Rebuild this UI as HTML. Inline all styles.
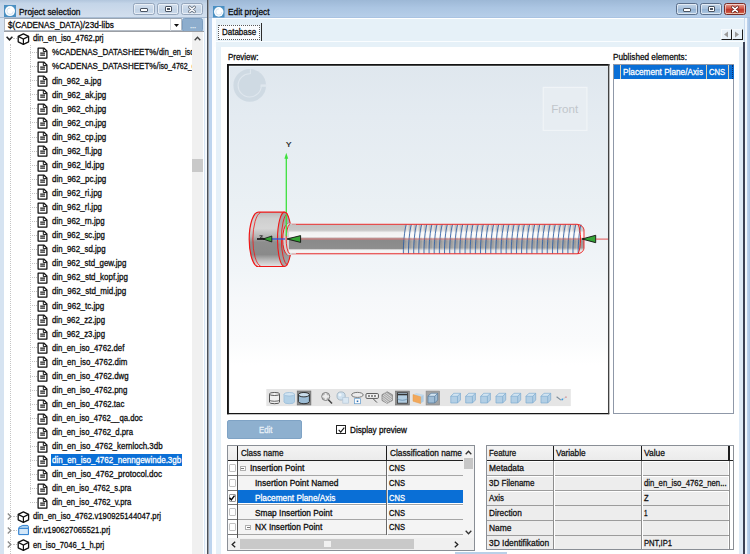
<!DOCTYPE html>
<html><head><meta charset="utf-8"><title>Edit project</title>
<style>
html,body{margin:0;padding:0;background:#fff}
#app{position:relative;width:750px;height:554px;overflow:hidden;background:#fff;font-family:"Liberation Sans", sans-serif}
#app div,#app svg,#app span.t{position:absolute}
#app svg{overflow:visible}
.t{-webkit-text-stroke:0.3px currentColor;white-space:pre;line-height:14px;height:14px;transform-origin:0 50%;display:block}
.clip{overflow:hidden;height:14px}
</style></head><body><div id="app">
<div style="left:0px;top:0px;width:208px;height:554px;background:#d6e3f1"></div>
<div style="left:0px;top:0px;width:208px;height:17.5px;background:linear-gradient(#b2c6dd,#c4d5e8 20%,#ccdaeb 60%,#d3e0ef)"></div>
<div style="left:0px;top:17px;width:208px;height:1px;background:#a9bdd4"></div>
<div style="left:203.3px;top:17.6px;width:3.6px;height:536.4px;background:linear-gradient(90deg,#d6e4f3 60%,#f4f8fc 62%)"></div>
<svg style="left:4px;top:5px" width="12" height="12" viewBox="0 0 12 12"><rect width="12" height="12" fill="#4b90c2"/><circle cx="6" cy="6.1" r="5" fill="#fdfeff"/><path d="M6.2 3a3.2 3.2 0 1 0 3.1 3.3" fill="none" stroke="#cfe2f1" stroke-width="0.9"/></svg>
<div style="left:133.3px;top:3.2px;width:22px;height:12.2px;box-sizing:border-box;border:1px solid #95a6bc;border-radius:2.5px;background:linear-gradient(#d3dfed,#c8d7e8 45%,#c1d2e5 50%,#cad9ea);box-shadow:inset 0 0 0 1px rgba(255,255,255,.55)"></div>
<div style="left:140.3px;top:8.4px;width:8px;height:3.4px;box-sizing:border-box;border:1px solid #4b5563;background:#fff;border-radius:1px"></div>
<div style="left:157.3px;top:3.2px;width:21.8px;height:12.2px;box-sizing:border-box;border:1px solid #95a6bc;border-radius:2.5px;background:linear-gradient(#d3dfed,#c8d7e8 45%,#c1d2e5 50%,#cad9ea);box-shadow:inset 0 0 0 1px rgba(255,255,255,.55)"></div>
<div style="left:164.70000000000002px;top:5.700000000000001px;width:7.5px;height:6px;box-sizing:border-box;border:1.2px solid #4b5563;background:#fff;border-radius:1px"></div>
<div style="left:166.70000000000002px;top:7.700000000000001px;width:3.5px;height:2px;background:#4b5563"></div>
<div style="left:181.1px;top:3.2px;width:21.8px;height:12.2px;box-sizing:border-box;border:1px solid #95a6bc;border-radius:2.5px;background:linear-gradient(#d3dfed,#c8d7e8 45%,#c1d2e5 50%,#cad9ea);box-shadow:inset 0 0 0 1px rgba(255,255,255,.55)"></div>
<svg style="left:187.0px;top:4.700000000000001px" width="10" height="9" viewBox="0 0 10 9"><path d="M2.6 2.2l4.8 4.4M7.4 2.2l-4.8 4.4" stroke="#5a6472" stroke-width="3" stroke-linecap="round"/><path d="M2.6 2.2l4.8 4.4M7.4 2.2l-4.8 4.4" stroke="#f4f6f9" stroke-width="1.6" stroke-linecap="round"/></svg>
<div style="left:3.6px;top:17.8px;width:178.2px;height:13.6px;background:#fff;box-sizing:border-box;border:1px solid #b4bcc6;border-top-color:#9aa5b2"></div>
<div style="left:170.2px;top:19px;width:1px;height:11.5px;background:#d5d9de"></div>
<svg style="left:174px;top:23.7px" width="5" height="3" viewBox="0 0 5 3"><path d="M0 0h5l-2.5 3z" fill="#111"/></svg>
<div style="left:182.4px;top:18px;width:20.4px;height:13.6px;background:#8dadcd;border-radius:2.5px;box-sizing:border-box;border:1px solid #7b9dc0"></div>
<div style="left:3.6px;top:31.4px;width:200px;height:522.6px;background:#fff"></div>
<div style="left:3.6px;top:31.2px;width:200px;height:1px;background:#9b9fa5"></div>
<div style="left:192px;top:32px;width:11.2px;height:522px;background:#f0f0f0"></div>
<div style="left:192.2px;top:159.2px;width:10.4px;height:12.4px;background:#c9c9c9"></div>
<svg style="left:194.3px;top:35.6px" width="7" height="5" viewBox="0 0 7 5"><path d="M0.7 4.2l2.8-3l2.8 3" fill="none" stroke="#404040" stroke-width="1.3"/></svg>
<div style="left:10px;top:44px;width:0;height:510px;border-left:1px dotted #c4c4c4"></div>
<div style="left:29.5px;top:45px;width:0;height:449px;border-left:1px dotted #c4c4c4"></div>
<svg style="left:16.8px;top:32.5px" width="13" height="12" viewBox="0 0 13 12"><path d="M6.4 0.8l5.2 2.6v5.4l-5.2 2.6l-5.2-2.6v-5.4z" fill="#fff" stroke="#111" stroke-width="1.3" stroke-linejoin="round"/><path d="M1.2 3.4l5.2 2.6l5.2-2.6M6.4 6v5.4" fill="none" stroke="#111" stroke-width="1.2"/></svg>
<svg style="left:6px;top:35.90px" width="7" height="5" viewBox="0 0 7 5"><path d="M0.6 0.8l2.9 3l2.9-3" fill="none" stroke="#222" stroke-width="1.6"/></svg>
<div style="left:12.6px;top:38.10px;width:4.5px;height:0;border-top:1px dotted #c4c4c4"></div>
<div style="left:30px;top:52.16px;width:6.5px;height:0;border-top:1px dotted #c4c4c4"></div>
<svg style="left:36.5px;top:47.06px" width="11" height="12" viewBox="0 0 11 12"><path d="M1.1 1h5.7l3.1 3v7.1h-8.8z" fill="#fff" stroke="#111" stroke-width="1.25" stroke-linejoin="round"/><path d="M6.3 1.2v3.4h3.4" fill="none" stroke="#111" stroke-width="1"/><path d="M3.2 6.1h4.8M3.2 8.1h4.8" stroke="#1c1c1c" stroke-width="1.05"/></svg>
<div style="left:30px;top:66.22px;width:6.5px;height:0;border-top:1px dotted #c4c4c4"></div>
<svg style="left:36.5px;top:61.12px" width="11" height="12" viewBox="0 0 11 12"><path d="M1.1 1h5.7l3.1 3v7.1h-8.8z" fill="#fff" stroke="#111" stroke-width="1.25" stroke-linejoin="round"/><path d="M6.3 1.2v3.4h3.4" fill="none" stroke="#111" stroke-width="1"/><path d="M3.2 6.1h4.8M3.2 8.1h4.8" stroke="#1c1c1c" stroke-width="1.05"/></svg>
<div style="left:30px;top:80.28px;width:6.5px;height:0;border-top:1px dotted #c4c4c4"></div>
<svg style="left:36.5px;top:75.18px" width="11" height="12" viewBox="0 0 11 12"><path d="M1.1 1h5.7l3.1 3v7.1h-8.8z" fill="#fff" stroke="#111" stroke-width="1.25" stroke-linejoin="round"/><path d="M6.3 1.2v3.4h3.4" fill="none" stroke="#111" stroke-width="1"/><path d="M3.2 6.1h4.8M3.2 8.1h4.8" stroke="#1c1c1c" stroke-width="1.05"/></svg>
<div style="left:30px;top:94.34px;width:6.5px;height:0;border-top:1px dotted #c4c4c4"></div>
<svg style="left:36.5px;top:89.24px" width="11" height="12" viewBox="0 0 11 12"><path d="M1.1 1h5.7l3.1 3v7.1h-8.8z" fill="#fff" stroke="#111" stroke-width="1.25" stroke-linejoin="round"/><path d="M6.3 1.2v3.4h3.4" fill="none" stroke="#111" stroke-width="1"/><path d="M3.2 6.1h4.8M3.2 8.1h4.8" stroke="#1c1c1c" stroke-width="1.05"/></svg>
<div style="left:30px;top:108.40px;width:6.5px;height:0;border-top:1px dotted #c4c4c4"></div>
<svg style="left:36.5px;top:103.3px" width="11" height="12" viewBox="0 0 11 12"><path d="M1.1 1h5.7l3.1 3v7.1h-8.8z" fill="#fff" stroke="#111" stroke-width="1.25" stroke-linejoin="round"/><path d="M6.3 1.2v3.4h3.4" fill="none" stroke="#111" stroke-width="1"/><path d="M3.2 6.1h4.8M3.2 8.1h4.8" stroke="#1c1c1c" stroke-width="1.05"/></svg>
<div style="left:30px;top:122.46px;width:6.5px;height:0;border-top:1px dotted #c4c4c4"></div>
<svg style="left:36.5px;top:117.36px" width="11" height="12" viewBox="0 0 11 12"><path d="M1.1 1h5.7l3.1 3v7.1h-8.8z" fill="#fff" stroke="#111" stroke-width="1.25" stroke-linejoin="round"/><path d="M6.3 1.2v3.4h3.4" fill="none" stroke="#111" stroke-width="1"/><path d="M3.2 6.1h4.8M3.2 8.1h4.8" stroke="#1c1c1c" stroke-width="1.05"/></svg>
<div style="left:30px;top:136.52px;width:6.5px;height:0;border-top:1px dotted #c4c4c4"></div>
<svg style="left:36.5px;top:131.42px" width="11" height="12" viewBox="0 0 11 12"><path d="M1.1 1h5.7l3.1 3v7.1h-8.8z" fill="#fff" stroke="#111" stroke-width="1.25" stroke-linejoin="round"/><path d="M6.3 1.2v3.4h3.4" fill="none" stroke="#111" stroke-width="1"/><path d="M3.2 6.1h4.8M3.2 8.1h4.8" stroke="#1c1c1c" stroke-width="1.05"/></svg>
<div style="left:30px;top:150.58px;width:6.5px;height:0;border-top:1px dotted #c4c4c4"></div>
<svg style="left:36.5px;top:145.48px" width="11" height="12" viewBox="0 0 11 12"><path d="M1.1 1h5.7l3.1 3v7.1h-8.8z" fill="#fff" stroke="#111" stroke-width="1.25" stroke-linejoin="round"/><path d="M6.3 1.2v3.4h3.4" fill="none" stroke="#111" stroke-width="1"/><path d="M3.2 6.1h4.8M3.2 8.1h4.8" stroke="#1c1c1c" stroke-width="1.05"/></svg>
<div style="left:30px;top:164.64px;width:6.5px;height:0;border-top:1px dotted #c4c4c4"></div>
<svg style="left:36.5px;top:159.54px" width="11" height="12" viewBox="0 0 11 12"><path d="M1.1 1h5.7l3.1 3v7.1h-8.8z" fill="#fff" stroke="#111" stroke-width="1.25" stroke-linejoin="round"/><path d="M6.3 1.2v3.4h3.4" fill="none" stroke="#111" stroke-width="1"/><path d="M3.2 6.1h4.8M3.2 8.1h4.8" stroke="#1c1c1c" stroke-width="1.05"/></svg>
<div style="left:30px;top:178.70px;width:6.5px;height:0;border-top:1px dotted #c4c4c4"></div>
<svg style="left:36.5px;top:173.6px" width="11" height="12" viewBox="0 0 11 12"><path d="M1.1 1h5.7l3.1 3v7.1h-8.8z" fill="#fff" stroke="#111" stroke-width="1.25" stroke-linejoin="round"/><path d="M6.3 1.2v3.4h3.4" fill="none" stroke="#111" stroke-width="1"/><path d="M3.2 6.1h4.8M3.2 8.1h4.8" stroke="#1c1c1c" stroke-width="1.05"/></svg>
<div style="left:30px;top:192.76px;width:6.5px;height:0;border-top:1px dotted #c4c4c4"></div>
<svg style="left:36.5px;top:187.66px" width="11" height="12" viewBox="0 0 11 12"><path d="M1.1 1h5.7l3.1 3v7.1h-8.8z" fill="#fff" stroke="#111" stroke-width="1.25" stroke-linejoin="round"/><path d="M6.3 1.2v3.4h3.4" fill="none" stroke="#111" stroke-width="1"/><path d="M3.2 6.1h4.8M3.2 8.1h4.8" stroke="#1c1c1c" stroke-width="1.05"/></svg>
<div style="left:30px;top:206.82px;width:6.5px;height:0;border-top:1px dotted #c4c4c4"></div>
<svg style="left:36.5px;top:201.72px" width="11" height="12" viewBox="0 0 11 12"><path d="M1.1 1h5.7l3.1 3v7.1h-8.8z" fill="#fff" stroke="#111" stroke-width="1.25" stroke-linejoin="round"/><path d="M6.3 1.2v3.4h3.4" fill="none" stroke="#111" stroke-width="1"/><path d="M3.2 6.1h4.8M3.2 8.1h4.8" stroke="#1c1c1c" stroke-width="1.05"/></svg>
<div style="left:30px;top:220.88px;width:6.5px;height:0;border-top:1px dotted #c4c4c4"></div>
<svg style="left:36.5px;top:215.78px" width="11" height="12" viewBox="0 0 11 12"><path d="M1.1 1h5.7l3.1 3v7.1h-8.8z" fill="#fff" stroke="#111" stroke-width="1.25" stroke-linejoin="round"/><path d="M6.3 1.2v3.4h3.4" fill="none" stroke="#111" stroke-width="1"/><path d="M3.2 6.1h4.8M3.2 8.1h4.8" stroke="#1c1c1c" stroke-width="1.05"/></svg>
<div style="left:30px;top:234.94px;width:6.5px;height:0;border-top:1px dotted #c4c4c4"></div>
<svg style="left:36.5px;top:229.84px" width="11" height="12" viewBox="0 0 11 12"><path d="M1.1 1h5.7l3.1 3v7.1h-8.8z" fill="#fff" stroke="#111" stroke-width="1.25" stroke-linejoin="round"/><path d="M6.3 1.2v3.4h3.4" fill="none" stroke="#111" stroke-width="1"/><path d="M3.2 6.1h4.8M3.2 8.1h4.8" stroke="#1c1c1c" stroke-width="1.05"/></svg>
<div style="left:30px;top:249.00px;width:6.5px;height:0;border-top:1px dotted #c4c4c4"></div>
<svg style="left:36.5px;top:243.9px" width="11" height="12" viewBox="0 0 11 12"><path d="M1.1 1h5.7l3.1 3v7.1h-8.8z" fill="#fff" stroke="#111" stroke-width="1.25" stroke-linejoin="round"/><path d="M6.3 1.2v3.4h3.4" fill="none" stroke="#111" stroke-width="1"/><path d="M3.2 6.1h4.8M3.2 8.1h4.8" stroke="#1c1c1c" stroke-width="1.05"/></svg>
<div style="left:30px;top:263.06px;width:6.5px;height:0;border-top:1px dotted #c4c4c4"></div>
<svg style="left:36.5px;top:257.96px" width="11" height="12" viewBox="0 0 11 12"><path d="M1.1 1h5.7l3.1 3v7.1h-8.8z" fill="#fff" stroke="#111" stroke-width="1.25" stroke-linejoin="round"/><path d="M6.3 1.2v3.4h3.4" fill="none" stroke="#111" stroke-width="1"/><path d="M3.2 6.1h4.8M3.2 8.1h4.8" stroke="#1c1c1c" stroke-width="1.05"/></svg>
<div style="left:30px;top:277.12px;width:6.5px;height:0;border-top:1px dotted #c4c4c4"></div>
<svg style="left:36.5px;top:272.02px" width="11" height="12" viewBox="0 0 11 12"><path d="M1.1 1h5.7l3.1 3v7.1h-8.8z" fill="#fff" stroke="#111" stroke-width="1.25" stroke-linejoin="round"/><path d="M6.3 1.2v3.4h3.4" fill="none" stroke="#111" stroke-width="1"/><path d="M3.2 6.1h4.8M3.2 8.1h4.8" stroke="#1c1c1c" stroke-width="1.05"/></svg>
<div style="left:30px;top:291.18px;width:6.5px;height:0;border-top:1px dotted #c4c4c4"></div>
<svg style="left:36.5px;top:286.08px" width="11" height="12" viewBox="0 0 11 12"><path d="M1.1 1h5.7l3.1 3v7.1h-8.8z" fill="#fff" stroke="#111" stroke-width="1.25" stroke-linejoin="round"/><path d="M6.3 1.2v3.4h3.4" fill="none" stroke="#111" stroke-width="1"/><path d="M3.2 6.1h4.8M3.2 8.1h4.8" stroke="#1c1c1c" stroke-width="1.05"/></svg>
<div style="left:30px;top:305.24px;width:6.5px;height:0;border-top:1px dotted #c4c4c4"></div>
<svg style="left:36.5px;top:300.14px" width="11" height="12" viewBox="0 0 11 12"><path d="M1.1 1h5.7l3.1 3v7.1h-8.8z" fill="#fff" stroke="#111" stroke-width="1.25" stroke-linejoin="round"/><path d="M6.3 1.2v3.4h3.4" fill="none" stroke="#111" stroke-width="1"/><path d="M3.2 6.1h4.8M3.2 8.1h4.8" stroke="#1c1c1c" stroke-width="1.05"/></svg>
<div style="left:30px;top:319.30px;width:6.5px;height:0;border-top:1px dotted #c4c4c4"></div>
<svg style="left:36.5px;top:314.2px" width="11" height="12" viewBox="0 0 11 12"><path d="M1.1 1h5.7l3.1 3v7.1h-8.8z" fill="#fff" stroke="#111" stroke-width="1.25" stroke-linejoin="round"/><path d="M6.3 1.2v3.4h3.4" fill="none" stroke="#111" stroke-width="1"/><path d="M3.2 6.1h4.8M3.2 8.1h4.8" stroke="#1c1c1c" stroke-width="1.05"/></svg>
<div style="left:30px;top:333.36px;width:6.5px;height:0;border-top:1px dotted #c4c4c4"></div>
<svg style="left:36.5px;top:328.26px" width="11" height="12" viewBox="0 0 11 12"><path d="M1.1 1h5.7l3.1 3v7.1h-8.8z" fill="#fff" stroke="#111" stroke-width="1.25" stroke-linejoin="round"/><path d="M6.3 1.2v3.4h3.4" fill="none" stroke="#111" stroke-width="1"/><path d="M3.2 6.1h4.8M3.2 8.1h4.8" stroke="#1c1c1c" stroke-width="1.05"/></svg>
<div style="left:30px;top:347.42px;width:6.5px;height:0;border-top:1px dotted #c4c4c4"></div>
<svg style="left:36.5px;top:342.32px" width="11" height="12" viewBox="0 0 11 12"><path d="M1.1 1h5.7l3.1 3v7.1h-8.8z" fill="#fff" stroke="#111" stroke-width="1.25" stroke-linejoin="round"/><path d="M6.3 1.2v3.4h3.4" fill="none" stroke="#111" stroke-width="1"/><path d="M3.2 6.1h4.8M3.2 8.1h4.8" stroke="#1c1c1c" stroke-width="1.05"/></svg>
<div style="left:30px;top:361.48px;width:6.5px;height:0;border-top:1px dotted #c4c4c4"></div>
<svg style="left:36.5px;top:356.38px" width="11" height="12" viewBox="0 0 11 12"><path d="M1.1 1h5.7l3.1 3v7.1h-8.8z" fill="#fff" stroke="#111" stroke-width="1.25" stroke-linejoin="round"/><path d="M6.3 1.2v3.4h3.4" fill="none" stroke="#111" stroke-width="1"/><path d="M3.2 6.1h4.8M3.2 8.1h4.8" stroke="#1c1c1c" stroke-width="1.05"/></svg>
<div style="left:30px;top:375.54px;width:6.5px;height:0;border-top:1px dotted #c4c4c4"></div>
<svg style="left:36.5px;top:370.44px" width="11" height="12" viewBox="0 0 11 12"><path d="M1.1 1h5.7l3.1 3v7.1h-8.8z" fill="#fff" stroke="#111" stroke-width="1.25" stroke-linejoin="round"/><path d="M6.3 1.2v3.4h3.4" fill="none" stroke="#111" stroke-width="1"/><path d="M3.2 6.1h4.8M3.2 8.1h4.8" stroke="#1c1c1c" stroke-width="1.05"/></svg>
<div style="left:30px;top:389.60px;width:6.5px;height:0;border-top:1px dotted #c4c4c4"></div>
<svg style="left:36.5px;top:384.5px" width="11" height="12" viewBox="0 0 11 12"><path d="M1.1 1h5.7l3.1 3v7.1h-8.8z" fill="#fff" stroke="#111" stroke-width="1.25" stroke-linejoin="round"/><path d="M6.3 1.2v3.4h3.4" fill="none" stroke="#111" stroke-width="1"/><path d="M3.2 6.1h4.8M3.2 8.1h4.8" stroke="#1c1c1c" stroke-width="1.05"/></svg>
<div style="left:30px;top:403.66px;width:6.5px;height:0;border-top:1px dotted #c4c4c4"></div>
<svg style="left:36.5px;top:398.56px" width="11" height="12" viewBox="0 0 11 12"><path d="M1.1 1h5.7l3.1 3v7.1h-8.8z" fill="#fff" stroke="#111" stroke-width="1.25" stroke-linejoin="round"/><path d="M6.3 1.2v3.4h3.4" fill="none" stroke="#111" stroke-width="1"/><path d="M3.2 6.1h4.8M3.2 8.1h4.8" stroke="#1c1c1c" stroke-width="1.05"/></svg>
<div style="left:30px;top:417.72px;width:6.5px;height:0;border-top:1px dotted #c4c4c4"></div>
<svg style="left:36.5px;top:412.62px" width="11" height="12" viewBox="0 0 11 12"><path d="M1.1 1h5.7l3.1 3v7.1h-8.8z" fill="#fff" stroke="#111" stroke-width="1.25" stroke-linejoin="round"/><path d="M6.3 1.2v3.4h3.4" fill="none" stroke="#111" stroke-width="1"/><path d="M3.2 6.1h4.8M3.2 8.1h4.8" stroke="#1c1c1c" stroke-width="1.05"/></svg>
<div style="left:30px;top:431.78px;width:6.5px;height:0;border-top:1px dotted #c4c4c4"></div>
<svg style="left:36.5px;top:426.68px" width="11" height="12" viewBox="0 0 11 12"><path d="M1.1 1h5.7l3.1 3v7.1h-8.8z" fill="#fff" stroke="#111" stroke-width="1.25" stroke-linejoin="round"/><path d="M6.3 1.2v3.4h3.4" fill="none" stroke="#111" stroke-width="1"/><path d="M3.2 6.1h4.8M3.2 8.1h4.8" stroke="#1c1c1c" stroke-width="1.05"/></svg>
<div style="left:30px;top:445.84px;width:6.5px;height:0;border-top:1px dotted #c4c4c4"></div>
<svg style="left:36.5px;top:440.74px" width="11" height="12" viewBox="0 0 11 12"><path d="M1.1 1h5.7l3.1 3v7.1h-8.8z" fill="#fff" stroke="#111" stroke-width="1.25" stroke-linejoin="round"/><path d="M6.3 1.2v3.4h3.4" fill="none" stroke="#111" stroke-width="1"/><path d="M3.2 6.1h4.8M3.2 8.1h4.8" stroke="#1c1c1c" stroke-width="1.05"/></svg>
<div style="left:30px;top:459.90px;width:6.5px;height:0;border-top:1px dotted #c4c4c4"></div>
<svg style="left:36.5px;top:454.8px" width="11" height="12" viewBox="0 0 11 12"><path d="M1.1 1h5.7l3.1 3v7.1h-8.8z" fill="#fff" stroke="#111" stroke-width="1.25" stroke-linejoin="round"/><path d="M6.3 1.2v3.4h3.4" fill="none" stroke="#111" stroke-width="1"/><path d="M3.2 6.1h4.8M3.2 8.1h4.8" stroke="#1c1c1c" stroke-width="1.05"/></svg>
<div style="left:51.4px;top:454.0px;width:130.2px;height:11.8px;background:#0a6fd6"></div>
<div style="left:30px;top:473.96px;width:6.5px;height:0;border-top:1px dotted #c4c4c4"></div>
<svg style="left:36.5px;top:468.86px" width="11" height="12" viewBox="0 0 11 12"><path d="M1.1 1h5.7l3.1 3v7.1h-8.8z" fill="#fff" stroke="#111" stroke-width="1.25" stroke-linejoin="round"/><path d="M6.3 1.2v3.4h3.4" fill="none" stroke="#111" stroke-width="1"/><path d="M3.2 6.1h4.8M3.2 8.1h4.8" stroke="#1c1c1c" stroke-width="1.05"/></svg>
<div style="left:30px;top:488.02px;width:6.5px;height:0;border-top:1px dotted #c4c4c4"></div>
<svg style="left:36.5px;top:482.92px" width="11" height="12" viewBox="0 0 11 12"><path d="M1.1 1h5.7l3.1 3v7.1h-8.8z" fill="#fff" stroke="#111" stroke-width="1.25" stroke-linejoin="round"/><path d="M6.3 1.2v3.4h3.4" fill="none" stroke="#111" stroke-width="1"/><path d="M3.2 6.1h4.8M3.2 8.1h4.8" stroke="#1c1c1c" stroke-width="1.05"/></svg>
<div style="left:30px;top:502.08px;width:6.5px;height:0;border-top:1px dotted #c4c4c4"></div>
<svg style="left:36.5px;top:496.98px" width="11" height="12" viewBox="0 0 11 12"><path d="M1.1 1h5.7l3.1 3v7.1h-8.8z" fill="#fff" stroke="#111" stroke-width="1.25" stroke-linejoin="round"/><path d="M6.3 1.2v3.4h3.4" fill="none" stroke="#111" stroke-width="1"/><path d="M3.2 6.1h4.8M3.2 8.1h4.8" stroke="#1c1c1c" stroke-width="1.05"/></svg>
<svg style="left:16.8px;top:510.54px" width="13" height="12" viewBox="0 0 13 12"><path d="M6.4 0.8l5.2 2.6v5.4l-5.2 2.6l-5.2-2.6v-5.4z" fill="#fff" stroke="#111" stroke-width="1.3" stroke-linejoin="round"/><path d="M1.2 3.4l5.2 2.6l5.2-2.6M6.4 6v5.4" fill="none" stroke="#111" stroke-width="1.2"/></svg>
<div style="left:12.6px;top:516.14px;width:4.5px;height:0;border-top:1px dotted #c4c4c4"></div>
<svg style="left:7px;top:512.74px" width="5" height="7" viewBox="0 0 5 7"><path d="M0.8 0.6l3 2.9l-3 2.9" fill="none" stroke="#8a8a8a" stroke-width="1.35"/></svg>
<svg style="left:16.8px;top:524.4px" width="13" height="12" viewBox="0 0 13 12"><path d="M1.8 4.2c0-1 .6-1.4 1.4-1.6l2.6-1.2h4.4c.8 0 1.2.5 1.2 1.2v7.6h-9.6z" fill="#a9d0f0" stroke="#2f80d0" stroke-width="1"/><path d="M1.8 4.4h9.6v6.2h-9.6z" fill="#d3e7f8" stroke="#2f80d0" stroke-width="1" stroke-linejoin="round"/></svg>
<div style="left:12.6px;top:530.20px;width:4.5px;height:0;border-top:1px dotted #c4c4c4"></div>
<svg style="left:7px;top:526.80px" width="5" height="7" viewBox="0 0 5 7"><path d="M0.8 0.6l3 2.9l-3 2.9" fill="none" stroke="#8a8a8a" stroke-width="1.35"/></svg>
<svg style="left:16.8px;top:538.66px" width="13" height="12" viewBox="0 0 13 12"><path d="M6.4 0.8l5.2 2.6v5.4l-5.2 2.6l-5.2-2.6v-5.4z" fill="#fff" stroke="#111" stroke-width="1.3" stroke-linejoin="round"/><path d="M1.2 3.4l5.2 2.6l5.2-2.6M6.4 6v5.4" fill="none" stroke="#111" stroke-width="1.2"/></svg>
<div style="left:12.6px;top:544.26px;width:4.5px;height:0;border-top:1px dotted #c4c4c4"></div>
<svg style="left:7px;top:540.86px" width="5" height="7" viewBox="0 0 5 7"><path d="M0.8 0.6l3 2.9l-3 2.9" fill="none" stroke="#8a8a8a" stroke-width="1.35"/></svg>
<div style="left:208px;top:0px;width:542px;height:554px;background:#c9dbee"></div>
<div style="left:208px;top:0px;width:542px;height:17px;background:linear-gradient(#9db8d6,#abc5e2 45%,#b6cee9)"></div>
<div style="left:208px;top:16.6px;width:542px;height:1px;background:#a9c3e2"></div>
<div style="left:208.4px;top:17.6px;width:3.9px;height:536.4px;background:#bdd4ee"></div>
<div style="left:212.3px;top:17.6px;width:3.7px;height:536.4px;background:#fbfdff"></div>
<div style="left:206.8px;top:0px;width:1.1px;height:554px;background:#4a4f57"></div>
<div style="left:207.9px;top:0px;width:0.8px;height:554px;background:#9a9fa6"></div>
<div style="left:216px;top:17.6px;width:528px;height:30px;background:#e6f1f8"></div>
<div style="left:214px;top:17.6px;width:530px;height:1.2px;background:#fff"></div>
<div style="left:214px;top:41px;width:530px;height:1px;background:#fafdff"></div>
<div style="left:214px;top:47px;width:525.5px;height:507px;background:#fff"></div>
<div style="left:216px;top:47px;width:5px;height:507px;background:#e5f0f8"></div>
<div style="left:739.3px;top:47px;width:4px;height:507px;background:#dfebf7"></div>
<div style="left:743.2px;top:41.5px;width:1.6px;height:512.5px;background:#3b4256"></div>
<div style="left:744.8px;top:17.6px;width:1.8px;height:536.4px;background:#f2f7fc"></div>
<div style="left:746.6px;top:17.6px;width:3.4px;height:536.4px;background:linear-gradient(90deg,#c0d5ed,#a3c0e3)"></div>
<svg style="left:213.3px;top:5.5px" width="11.5" height="11.5" viewBox="0 0 12 12"><rect width="12" height="12" fill="#4b90c2"/><circle cx="6" cy="6.1" r="5" fill="#fdfeff"/><path d="M6.2 3a3.2 3.2 0 1 0 3.1 3.3" fill="none" stroke="#cfe2f1" stroke-width="0.9"/></svg>
<div style="left:676.3px;top:3.3px;width:22px;height:12px;box-sizing:border-box;border:1px solid #5c708b;border-radius:2.5px;background:linear-gradient(#c3d5e8,#a9c2dd 45%,#93b2d3 50%,#b0c9e2);box-shadow:inset 0 0 0 1px rgba(255,255,255,.55)"></div>
<div style="left:683.3px;top:8.4px;width:8px;height:3.4px;box-sizing:border-box;border:1px solid #4b5563;background:#fff;border-radius:1px"></div>
<div style="left:700.3px;top:3.3px;width:21.7px;height:12px;box-sizing:border-box;border:1px solid #5c708b;border-radius:2.5px;background:linear-gradient(#c3d5e8,#a9c2dd 45%,#93b2d3 50%,#b0c9e2);box-shadow:inset 0 0 0 1px rgba(255,255,255,.55)"></div>
<div style="left:707.65px;top:5.700000000000001px;width:7.5px;height:6px;box-sizing:border-box;border:1.2px solid #4b5563;background:#fff;border-radius:1px"></div>
<div style="left:709.65px;top:7.700000000000001px;width:3.5px;height:2px;background:#4b5563"></div>
<div style="left:724.2px;top:3.3px;width:22.2px;height:12px;box-sizing:border-box;border:1px solid #7a2c26;border-radius:2.5px;background:linear-gradient(#e8a396,#cf5546 45%,#bc372b 52%,#c8493a 80%,#de8a5c);box-shadow:inset 0 0 0 1px rgba(255,255,255,.55)"></div>
<svg style="left:730.3000000000001px;top:4.700000000000001px" width="10" height="9" viewBox="0 0 10 9"><path d="M2.6 2.2l4.8 4.4M7.4 2.2l-4.8 4.4" stroke="#5b1f1b" stroke-width="3" stroke-linecap="round"/><path d="M2.6 2.2l4.8 4.4M7.4 2.2l-4.8 4.4" stroke="#fff" stroke-width="1.6" stroke-linecap="round"/></svg>
<div style="left:218px;top:25px;width:41.5px;height:15px;background:#fafcfe;box-sizing:border-box;border:1px dotted #5a5a5a"></div>
<div style="left:260.6px;top:23.3px;width:1.2px;height:17.6px;background:#2c2c2c"></div>
<div style="left:721px;top:28.8px;width:11.3px;height:11.1px;background:#e8f1f9;box-sizing:border-box;border-right:1.3px solid #1c1c1c;border-bottom:1.3px solid #1c1c1c;border-top:1px solid #f6fafd;border-left:1px solid #f6fafd"></div>
<svg style="left:723px;top:30.8px" width="6" height="7" viewBox="0 0 6 7"><path d="M5 0.5v6l-4-3z" fill="#9a9a9a"/></svg>
<div style="left:732.3px;top:28.8px;width:10.6px;height:11.1px;background:#e8f1f9;box-sizing:border-box;border-right:1.3px solid #1c1c1c;border-bottom:1.3px solid #1c1c1c;border-top:1px solid #f6fafd;border-left:1px solid #f6fafd"></div>
<svg style="left:734.3px;top:30.8px" width="6" height="7" viewBox="0 0 6 7"><path d="M1 0.5v6l4-3z" fill="#9a9a9a"/></svg>
<svg style="left:227px;top:63.8px" width="382.6" height="350.2" viewBox="227 63.8 382.6 350.2"><defs><linearGradient id="bg" x1="0" y1="0" x2="0" y2="1"><stop offset="0" stop-color="#dfe7ee"/><stop offset="0.15" stop-color="#e4ebf1"/><stop offset="0.4" stop-color="#eaf0f4"/><stop offset="0.59" stop-color="#f1f5f8"/><stop offset="0.67" stop-color="#f6f8fa"/><stop offset="0.79" stop-color="#fafbfc"/><stop offset="0.86" stop-color="#ffffff"/><stop offset="1" stop-color="#ffffff"/></linearGradient><linearGradient id="sh" x1="0" y1="0" x2="0" y2="1"><stop offset="0" stop-color="#c2c2c2"/><stop offset="0.2" stop-color="#c8c8c8"/><stop offset="0.28" stop-color="#f2f2f2"/><stop offset="0.42" stop-color="#f6f6f6"/><stop offset="0.49" stop-color="#b09a9a"/><stop offset="0.55" stop-color="#8a8a8a"/><stop offset="0.82" stop-color="#8e8e8e"/><stop offset="0.87" stop-color="#f0f0f0"/><stop offset="0.95" stop-color="#f6f6f6"/><stop offset="1" stop-color="#d0d0d0"/></linearGradient><linearGradient id="th" x1="0" y1="0" x2="0" y2="1"><stop offset="0" stop-color="#c6c6c6"/><stop offset="0.2" stop-color="#cecece"/><stop offset="0.28" stop-color="#f6f6f6"/><stop offset="0.43" stop-color="#fafafa"/><stop offset="0.5" stop-color="#b8a6a6"/><stop offset="0.57" stop-color="#9a9a9a"/><stop offset="0.8" stop-color="#a2a2a2"/><stop offset="0.88" stop-color="#e6e6e6"/><stop offset="0.95" stop-color="#f0f0f0"/><stop offset="1" stop-color="#d0d0d0"/></linearGradient><linearGradient id="rib" x1="0" y1="0" x2="1" y2="0"><stop offset="0" stop-color="#000" stop-opacity="0.10"/><stop offset="0.35" stop-color="#fff" stop-opacity="0.0"/><stop offset="0.6" stop-color="#fff" stop-opacity="0.5"/><stop offset="1" stop-color="#fff" stop-opacity="0.05"/></linearGradient><linearGradient id="hd" x1="0" y1="0" x2="0" y2="1"><stop offset="0" stop-color="#b9b9b9"/><stop offset="0.12" stop-color="#cfcfcf"/><stop offset="0.3" stop-color="#d6d6d6"/><stop offset="0.45" stop-color="#b4b4b4"/><stop offset="0.55" stop-color="#8e8e8e"/><stop offset="0.78" stop-color="#8a8a8a"/><stop offset="0.9" stop-color="#c2c2c2"/><stop offset="1" stop-color="#e4e4e4"/></linearGradient><linearGradient id="hf" x1="0" y1="0" x2="0" y2="1"><stop offset="0" stop-color="#9a9a9a"/><stop offset="0.4" stop-color="#b8b8b8"/><stop offset="0.6" stop-color="#8c8c8c"/><stop offset="1" stop-color="#a8a8a8"/></linearGradient></defs><rect x="227" y="63.8" width="382.6" height="350.2" fill="url(#bg)"/><circle cx="249.7" cy="85.2" r="16.3" fill="#cfdae3"/><path d="M250.3 73.6a11.6 11.6 0 1 0 11 11.6" fill="none" stroke="#dfe7ee" stroke-width="1.1"/><path d="M250.4 69v4.8" stroke="#dfe7ee" stroke-width="1.1"/><path d="M260.6 85.4h5.6" stroke="#dfe7ee" stroke-width="2.4"/><rect x="543.3" y="87.2" width="43.6" height="43" fill="#e7edf2" stroke="#f0f4f7" stroke-width="1.2"/><text x="551.2" y="113.2" font-family="Liberation Sans, sans-serif" font-size="10.6" fill="#c1c6cb" textLength="27" lengthAdjust="spacingAndGlyphs">Front</text><path d="M286.3 239V157" stroke="#3de03d" stroke-width="1.3"/><path d="M286.3 152.6l-1.9 6h3.8z" fill="#3de03d"/><text x="286" y="146.7" font-family="Liberation Sans, sans-serif" font-size="8.1" fill="#111" stroke="#111" stroke-width="0.25">Y</text><path d="M286 224.1H577c4.6 0.4 6.6 3 7 5.6v18.4c-0.4 2.6-2.4 5.2-7 5.5H286z" fill="url(#sh)"/><path d="M404 224.1H577c4.6 0.4 6.6 3 7 5.6v18.4c-0.4 2.6-2.4 5.2-7 5.5H404z" fill="url(#th)"/><rect x="404.00" y="224.6" width="5.14" height="14.4" fill="url(#rib)"/><rect x="404.00" y="239" width="5.14" height="14.2" fill="url(#rib)" opacity="0.4"/><rect x="409.14" y="224.6" width="5.14" height="14.4" fill="url(#rib)"/><rect x="409.14" y="239" width="5.14" height="14.2" fill="url(#rib)" opacity="0.4"/><rect x="414.28" y="224.6" width="5.14" height="14.4" fill="url(#rib)"/><rect x="414.28" y="239" width="5.14" height="14.2" fill="url(#rib)" opacity="0.4"/><rect x="419.42" y="224.6" width="5.14" height="14.4" fill="url(#rib)"/><rect x="419.42" y="239" width="5.14" height="14.2" fill="url(#rib)" opacity="0.4"/><rect x="424.56" y="224.6" width="5.14" height="14.4" fill="url(#rib)"/><rect x="424.56" y="239" width="5.14" height="14.2" fill="url(#rib)" opacity="0.4"/><rect x="429.70" y="224.6" width="5.14" height="14.4" fill="url(#rib)"/><rect x="429.70" y="239" width="5.14" height="14.2" fill="url(#rib)" opacity="0.4"/><rect x="434.84" y="224.6" width="5.14" height="14.4" fill="url(#rib)"/><rect x="434.84" y="239" width="5.14" height="14.2" fill="url(#rib)" opacity="0.4"/><rect x="439.98" y="224.6" width="5.14" height="14.4" fill="url(#rib)"/><rect x="439.98" y="239" width="5.14" height="14.2" fill="url(#rib)" opacity="0.4"/><rect x="445.12" y="224.6" width="5.14" height="14.4" fill="url(#rib)"/><rect x="445.12" y="239" width="5.14" height="14.2" fill="url(#rib)" opacity="0.4"/><rect x="450.26" y="224.6" width="5.14" height="14.4" fill="url(#rib)"/><rect x="450.26" y="239" width="5.14" height="14.2" fill="url(#rib)" opacity="0.4"/><rect x="455.40" y="224.6" width="5.14" height="14.4" fill="url(#rib)"/><rect x="455.40" y="239" width="5.14" height="14.2" fill="url(#rib)" opacity="0.4"/><rect x="460.54" y="224.6" width="5.14" height="14.4" fill="url(#rib)"/><rect x="460.54" y="239" width="5.14" height="14.2" fill="url(#rib)" opacity="0.4"/><rect x="465.68" y="224.6" width="5.14" height="14.4" fill="url(#rib)"/><rect x="465.68" y="239" width="5.14" height="14.2" fill="url(#rib)" opacity="0.4"/><rect x="470.82" y="224.6" width="5.14" height="14.4" fill="url(#rib)"/><rect x="470.82" y="239" width="5.14" height="14.2" fill="url(#rib)" opacity="0.4"/><rect x="475.96" y="224.6" width="5.14" height="14.4" fill="url(#rib)"/><rect x="475.96" y="239" width="5.14" height="14.2" fill="url(#rib)" opacity="0.4"/><rect x="481.10" y="224.6" width="5.14" height="14.4" fill="url(#rib)"/><rect x="481.10" y="239" width="5.14" height="14.2" fill="url(#rib)" opacity="0.4"/><rect x="486.24" y="224.6" width="5.14" height="14.4" fill="url(#rib)"/><rect x="486.24" y="239" width="5.14" height="14.2" fill="url(#rib)" opacity="0.4"/><rect x="491.38" y="224.6" width="5.14" height="14.4" fill="url(#rib)"/><rect x="491.38" y="239" width="5.14" height="14.2" fill="url(#rib)" opacity="0.4"/><rect x="496.52" y="224.6" width="5.14" height="14.4" fill="url(#rib)"/><rect x="496.52" y="239" width="5.14" height="14.2" fill="url(#rib)" opacity="0.4"/><rect x="501.66" y="224.6" width="5.14" height="14.4" fill="url(#rib)"/><rect x="501.66" y="239" width="5.14" height="14.2" fill="url(#rib)" opacity="0.4"/><rect x="506.80" y="224.6" width="5.14" height="14.4" fill="url(#rib)"/><rect x="506.80" y="239" width="5.14" height="14.2" fill="url(#rib)" opacity="0.4"/><rect x="511.94" y="224.6" width="5.14" height="14.4" fill="url(#rib)"/><rect x="511.94" y="239" width="5.14" height="14.2" fill="url(#rib)" opacity="0.4"/><rect x="517.08" y="224.6" width="5.14" height="14.4" fill="url(#rib)"/><rect x="517.08" y="239" width="5.14" height="14.2" fill="url(#rib)" opacity="0.4"/><rect x="522.22" y="224.6" width="5.14" height="14.4" fill="url(#rib)"/><rect x="522.22" y="239" width="5.14" height="14.2" fill="url(#rib)" opacity="0.4"/><rect x="527.36" y="224.6" width="5.14" height="14.4" fill="url(#rib)"/><rect x="527.36" y="239" width="5.14" height="14.2" fill="url(#rib)" opacity="0.4"/><rect x="532.50" y="224.6" width="5.14" height="14.4" fill="url(#rib)"/><rect x="532.50" y="239" width="5.14" height="14.2" fill="url(#rib)" opacity="0.4"/><rect x="537.64" y="224.6" width="5.14" height="14.4" fill="url(#rib)"/><rect x="537.64" y="239" width="5.14" height="14.2" fill="url(#rib)" opacity="0.4"/><rect x="542.78" y="224.6" width="5.14" height="14.4" fill="url(#rib)"/><rect x="542.78" y="239" width="5.14" height="14.2" fill="url(#rib)" opacity="0.4"/><rect x="547.92" y="224.6" width="5.14" height="14.4" fill="url(#rib)"/><rect x="547.92" y="239" width="5.14" height="14.2" fill="url(#rib)" opacity="0.4"/><rect x="553.06" y="224.6" width="5.14" height="14.4" fill="url(#rib)"/><rect x="553.06" y="239" width="5.14" height="14.2" fill="url(#rib)" opacity="0.4"/><rect x="558.20" y="224.6" width="5.14" height="14.4" fill="url(#rib)"/><rect x="558.20" y="239" width="5.14" height="14.2" fill="url(#rib)" opacity="0.4"/><rect x="563.34" y="224.6" width="5.14" height="14.4" fill="url(#rib)"/><rect x="563.34" y="239" width="5.14" height="14.2" fill="url(#rib)" opacity="0.4"/><rect x="568.48" y="224.6" width="5.14" height="14.4" fill="url(#rib)"/><rect x="568.48" y="239" width="5.14" height="14.2" fill="url(#rib)" opacity="0.4"/><rect x="573.62" y="224.6" width="5.14" height="14.4" fill="url(#rib)"/><rect x="573.62" y="239" width="5.14" height="14.2" fill="url(#rib)" opacity="0.4"/><path d="M403.4 253.4C403.1 244 404.6 230 406.2 224.4M408.5 253.4C408.2 244 409.7 230 411.3 224.4M413.7 253.4C413.4 244 414.9 230 416.5 224.4M418.8 253.4C418.5 244 420.0 230 421.6 224.4M424.0 253.4C423.7 244 425.2 230 426.8 224.4M429.1 253.4C428.8 244 430.3 230 431.9 224.4M434.2 253.4C433.9 244 435.4 230 437.0 224.4M439.4 253.4C439.1 244 440.6 230 442.2 224.4M444.5 253.4C444.2 244 445.7 230 447.3 224.4M449.7 253.4C449.4 244 450.9 230 452.5 224.4M454.8 253.4C454.5 244 456.0 230 457.6 224.4M459.9 253.4C459.6 244 461.1 230 462.7 224.4M465.1 253.4C464.8 244 466.3 230 467.9 224.4M470.2 253.4C469.9 244 471.4 230 473.0 224.4M475.4 253.4C475.1 244 476.6 230 478.2 224.4M480.5 253.4C480.2 244 481.7 230 483.3 224.4M485.6 253.4C485.3 244 486.8 230 488.4 224.4M490.8 253.4C490.5 244 492.0 230 493.6 224.4M495.9 253.4C495.6 244 497.1 230 498.7 224.4M501.1 253.4C500.8 244 502.3 230 503.9 224.4M506.2 253.4C505.9 244 507.4 230 509.0 224.4M511.3 253.4C511.0 244 512.5 230 514.1 224.4M516.5 253.4C516.2 244 517.7 230 519.3 224.4M521.6 253.4C521.3 244 522.8 230 524.4 224.4M526.8 253.4C526.5 244 528.0 230 529.6 224.4M531.9 253.4C531.6 244 533.1 230 534.7 224.4M537.0 253.4C536.7 244 538.2 230 539.8 224.4M542.2 253.4C541.9 244 543.4 230 545.0 224.4M547.3 253.4C547.0 244 548.5 230 550.1 224.4M552.5 253.4C552.2 244 553.7 230 555.3 224.4M557.6 253.4C557.3 244 558.8 230 560.4 224.4M562.7 253.4C562.4 244 563.9 230 565.5 224.4M567.9 253.4C567.6 244 569.1 230 570.7 224.4M573.0 253.4C572.7 244 574.2 230 575.8 224.4M578.2 253.4C577.9 244 579.4 230 581.0 224.4" fill="none" stroke="#2d5ea4" stroke-width="0.9" opacity="0.95"/><path d="M300 238.8H582" stroke="#d06a6a" stroke-width="1" opacity="0.8"/><path d="M288 224.1H577c4.6 0.4 6.6 3 7 5.6v18.4c-0.4 2.6-2.4 5.2-7 5.5H288" fill="none" stroke="#ee2222" stroke-width="0.95"/><path d="M578 224.1c3.4 6 3.4 23.4 0 29.5" fill="none" stroke="#f01818" stroke-width="0.9"/><path d="M258.3 211.9H284a8.2 27.2 0 0 1 0 54.4H258.3a9.1 27.2 0 0 1 0-54.4z" fill="url(#hd)"/><path d="M258.3 211.9H284.5M258.3 266.3H284.5" stroke="#f01818" stroke-width="1.1"/><path d="M258.3 211.9a9.1 27.2 0 0 0 0 54.4" fill="none" stroke="#f01818" stroke-width="1.2"/><path d="M260.6 212.3a8.8 27 0 0 0 0 53.6" fill="none" stroke="#f01818" stroke-width="0.8"/><ellipse cx="284.5" cy="239.1" rx="7" ry="27.2" fill="url(#hf)" stroke="#f01818" stroke-width="1.1"/><path d="M287.4 213.6a6.6 25.6 0 0 0 0 51" fill="none" stroke="#f01818" stroke-width="0.9"/><path d="M287.5 223.4c-6.4 3-6.4 28.4 0 31.4H292V223.4z" fill="#d2d2d2"/><path d="M289 224.1H296V253.6H289z" fill="url(#sh)"/><path d="M287.5 223.4c-6.4 3-6.4 28.4 0 31.4" fill="none" stroke="#f01818" stroke-width="1"/><path d="M289.6 224.1c-4.6 4-4.6 25.6 0 29.5" fill="none" stroke="#f01818" stroke-width="0.9"/><path d="M286.3 214V236" stroke="#3de03d" stroke-width="1.3"/><path d="M271.8 238.8H285" stroke="#2a4fe0" stroke-width="1.2"/><path d="M257 238.8H266" stroke="#111" stroke-width="1.6"/><path d="M259.5 235.6h3l-2.4 2.4h3" fill="none" stroke="#111" stroke-width="0.8"/><path d="M263 238.8L271.8 235.8V241.8z" fill="#35a535" stroke="#111" stroke-width="0.8" stroke-linejoin="round"/><path d="M287 238.8L300.6 235.4V242.2z" fill="#35a535" stroke="#111" stroke-width="0.9" stroke-linejoin="round"/><path d="M582 238.8L595.7 235.1V242.5z" fill="#35a535" stroke="#111" stroke-width="0.9" stroke-linejoin="round"/><path d="M596 238.9H608" stroke="#e05050" stroke-width="1"/><rect x="266.3" y="388.8" width="304.5" height="17.1" fill="#e5e5e5"/><path d="M269.5 393.8v8.2a5.0 1.5 0 0 0 10 0v-8.2z" fill="#f0f0f0" stroke="#444" stroke-width="0.9"/><ellipse cx="274.5" cy="393.8" rx="5.0" ry="1.5" fill="#f6f6f6" stroke="#444" stroke-width="0.9"/><path d="M269.5 399.6a5 1.5 0 0 0 10 0" fill="none" stroke="#444" stroke-width="0.8"/><path d="M284 394.1v7.6a5.25 1.8 0 0 0 10.5 0v-7.6z" fill="#b3d1e7" stroke="#9fc0da" stroke-width="0.9"/><ellipse cx="289.25" cy="394.1" rx="5.25" ry="1.8" fill="#d3e5f2" stroke="#9fc0da" stroke-width="0.9"/><rect x="297.2" y="390.8" width="13.7" height="14" fill="#8d8d8d" stroke="#6a6a6a" stroke-width="0.6"/><path d="M298.4 394.5v6.799999999999999a5.5 2.2 0 0 0 11 0v-6.799999999999999z" fill="#9dbdd6" stroke="#222" stroke-width="0.9"/><ellipse cx="303.9" cy="394.5" rx="5.5" ry="2.2" fill="#c9dcea" stroke="#222" stroke-width="0.9"/><circle cx="325.7" cy="396.3" r="4" fill="#ececec" stroke="#777" stroke-width="1"/><path d="M323.6 395.2v-1.2h1.2M326.6 394h1.2v1.2M327.8 397.4v1.2h-1.2M324.8 398.6h-1.2v-1.2" fill="none" stroke="#888" stroke-width="0.6"/><path d="M328.4 399.6l3.6 3.8" stroke="#444" stroke-width="1.5"/><circle cx="341.1" cy="395.8" r="4.1" fill="#cfe1ef" stroke="#a3b4c2" stroke-width="0.9"/><circle cx="340" cy="394.6" r="1.6" fill="#eef5fa"/><rect x="342.8" y="397.4" width="5.6" height="5.6" fill="#d9e7f2" stroke="#b4c8d9" stroke-width="0.7"/><ellipse cx="357.4" cy="394.7" rx="5.8" ry="2.5" fill="#ececec" stroke="#6a6a6a" stroke-width="0.9"/><rect x="354.6" y="398.5" width="5.8" height="5" fill="#fff" stroke="#6fa3d0" stroke-width="0.8"/><rect x="356.7" y="400.3" width="1.6" height="1.6" fill="#2b6cb0"/><rect x="366" y="393.4" width="12.4" height="4.8" rx="1" fill="#f8f8f8" stroke="#444" stroke-width="0.9"/><path d="M368 395.8h2M371 395.8h2M374 395.8h2" stroke="#222" stroke-width="1"/><path d="M373 398.4l4 4" stroke="#555" stroke-width="1"/><path d="M387.2 391.6l5.2 2.9v5.8l-5.2 2.9l-5.2-2.9v-5.8z" fill="#a9a9a9" stroke="#777" stroke-width="0.7"/><path d="M383 395l8 6M384 393.6l8 6M385.6 392.4l6.6 5M382.4 397l7 5.4M382.4 399l5 4" stroke="#ededed" stroke-width="0.7"/><rect x="395.6" y="390.9" width="13.7" height="13.9" fill="#8d8d8d" stroke="#6a6a6a" stroke-width="0.6"/><rect x="397.6" y="392.6" width="9.8" height="10.4" fill="#b3cee2" stroke="#333" stroke-width="0.8"/><path d="M397.6 394.4h9.8" stroke="#333" stroke-width="1.4"/><path d="M397.4 398.6c3 2 7 2 10.2 0" stroke="#5f87a8" stroke-width="0.7" fill="none"/><path d="M413 394.4l3.5-1.6l7.1 1.8l-3 2z" fill="#c3daeb"/><path d="M420.6 396.6l3-2v6.6l-3 2.2z" fill="#aecde5"/><path d="M413 394.4l7.6 2.2v6.8l-7.6-2.4z" fill="#f2a85a" stroke="#e39a4c" stroke-width="0.5"/><rect x="426.1" y="390.9" width="13.5" height="13.9" fill="#a2a2a2" stroke="#888" stroke-width="0.6"/><path d="M428 396.1l3-3h6.7v6.7l-3 3h-6.7z" fill="#9fbdd6" stroke="#55799a" stroke-width="0.7" stroke-linejoin="round"/><path d="M428.4 396.40000000000003l2.8-2.8h6l-2.8 2.8z" fill="#d3e4f1"/><path d="M428 396.1h6.7v6.7M434.7 396.1l3-3" fill="none" stroke="#55799a" stroke-width="0.7"/><path d="M450.8 396.1l3-3h6.7v6.7l-3 3h-6.7z" fill="#b3cfe5" stroke="#7daad0" stroke-width="0.7" stroke-linejoin="round"/><path d="M451.2 396.40000000000003l2.8-2.8h6l-2.8 2.8z" fill="#d3e4f1"/><path d="M450.8 396.1h6.7v6.7M457.5 396.1l3-3" fill="none" stroke="#7daad0" stroke-width="0.7"/><path d="M465.7 396.1l3-3h6.7v6.7l-3 3h-6.7z" fill="#b3cfe5" stroke="#7daad0" stroke-width="0.7" stroke-linejoin="round"/><path d="M466.09999999999997 396.40000000000003l2.8-2.8h6l-2.8 2.8z" fill="#d3e4f1"/><path d="M465.7 396.1h6.7v6.7M472.4 396.1l3-3" fill="none" stroke="#7daad0" stroke-width="0.7"/><path d="M480.7 396.1l3-3h6.7v6.7l-3 3h-6.7z" fill="#b3cfe5" stroke="#7daad0" stroke-width="0.7" stroke-linejoin="round"/><path d="M481.09999999999997 396.40000000000003l2.8-2.8h6l-2.8 2.8z" fill="#d3e4f1"/><path d="M480.7 396.1h6.7v6.7M487.4 396.1l3-3" fill="none" stroke="#7daad0" stroke-width="0.7"/><path d="M496 396.1l3-3h6.7v6.7l-3 3h-6.7z" fill="#b3cfe5" stroke="#7daad0" stroke-width="0.7" stroke-linejoin="round"/><path d="M496.4 396.40000000000003l2.8-2.8h6l-2.8 2.8z" fill="#d3e4f1"/><path d="M496 396.1h6.7v6.7M502.7 396.1l3-3" fill="none" stroke="#7daad0" stroke-width="0.7"/><path d="M511 396.1l3-3h6.7v6.7l-3 3h-6.7z" fill="#b3cfe5" stroke="#7daad0" stroke-width="0.7" stroke-linejoin="round"/><path d="M511.4 396.40000000000003l2.8-2.8h6l-2.8 2.8z" fill="#d3e4f1"/><path d="M511 396.1h6.7v6.7M517.7 396.1l3-3" fill="none" stroke="#7daad0" stroke-width="0.7"/><path d="M526 396.1l3-3h6.7v6.7l-3 3h-6.7z" fill="#b3cfe5" stroke="#7daad0" stroke-width="0.7" stroke-linejoin="round"/><path d="M526.4 396.40000000000003l2.8-2.8h6l-2.8 2.8z" fill="#d3e4f1"/><path d="M526 396.1h6.7v6.7M532.7 396.1l3-3" fill="none" stroke="#7daad0" stroke-width="0.7"/><path d="M541 396.1l3-3h6.7v6.7l-3 3h-6.7z" fill="#b3cfe5" stroke="#7daad0" stroke-width="0.7" stroke-linejoin="round"/><path d="M541.4 396.40000000000003l2.8-2.8h6l-2.8 2.8z" fill="#d3e4f1"/><path d="M541 396.1h6.7v6.7M547.7 396.1l3-3" fill="none" stroke="#7daad0" stroke-width="0.7"/><path d="M556.6 396.6l4.4 3.4" fill="none" stroke="#7d8b98" stroke-width="1.1"/><path d="M561 400l5.4-3.4" stroke="#c9d3dc" stroke-width="1.3"/><circle cx="562.3" cy="399.2" r="0.9" fill="#3a9ae0"/><circle cx="566" cy="396.9" r="0.7" fill="#d66"/><path d="M229 66.1H608M229.5 66V412.6" stroke="#f1f5f8" stroke-width="0.9" fill="none"/><path d="M227 64.7H609.6" stroke="#141414" stroke-width="1.8"/><path d="M227.95 64V414" stroke="#141414" stroke-width="1.9"/><path d="M227 413.35H609.4" stroke="#161616" stroke-width="1.3"/><path d="M608.5 64V414" stroke="#333" stroke-width="1"/><path d="M609.3 64V413.5" stroke="#8c8c8c" stroke-width="0.7"/></svg>
<div style="left:613px;top:64px;width:121px;height:350px;background:#fff;box-sizing:border-box;border:1px solid #8f98a8"></div>
<div style="left:614px;top:65px;width:119.5px;height:13.6px;background:#0a6fd6"></div>
<div style="left:619.5px;top:65px;width:1.1px;height:13.6px;background:#e8d3b0"></div>
<div style="left:705.8px;top:65px;width:1.1px;height:13.6px;background:#e8d3b0"></div>
<div style="left:727.5px;top:65px;width:1.1px;height:13.6px;background:#e8d3b0"></div>
<div style="left:732.3px;top:65px;width:0;height:13.6px;border-left:1px dotted #10306a"></div>
<div style="left:227.2px;top:420px;width:75px;height:19.2px;background:#8eb0cf;box-sizing:border-box;border:1px solid #7fa3c5;border-radius:2px"></div>
<div style="left:336px;top:424.8px;width:9.8px;height:9.5px;background:#fff;box-sizing:border-box;border:1.1px solid #222"></div>
<svg style="left:337.6px;top:426.6px" width="7" height="6" viewBox="0 0 7 6"><path d="M0.7 2.9l2 2.2l3.6-4.5" fill="none" stroke="#111" stroke-width="1.1"/></svg>
<div style="left:227px;top:445px;width:247.5px;height:106px;background:#fff;box-sizing:border-box;border:1px solid #8a8f96"></div>
<div style="left:228px;top:445.8px;width:234.6px;height:14.4px;background:linear-gradient(#f4f4f4,#ebebeb)"></div>
<div style="left:228px;top:460px;width:234.6px;height:1.3px;background:#222"></div>
<div style="left:236.6px;top:445.8px;width:1.2px;height:92.3px;background:#555"></div>
<div style="left:236.5px;top:445.8px;width:1.5px;height:15.3px;background:#1c1c1c"></div>
<div style="left:386px;top:445.8px;width:1.3px;height:15.3px;background:#1c1c1c"></div>
<div style="left:237.8px;top:461.4px;width:224.8px;height:13.55px;background:#f4f4f4"></div>
<div style="left:228px;top:474.95px;width:9px;height:1px;background:#777"></div>
<div style="left:237.8px;top:474.95px;width:224.8px;height:1px;background:#a6a6a6"></div>
<div style="left:228.8px;top:464.2px;width:7.2px;height:8px;background:#fff;box-sizing:border-box;border:1px solid #c2c2c2;border-radius:1px"></div>
<div style="left:239.8px;top:465.59999999999997px;width:5.8px;height:5.8px;background:#fff;box-sizing:border-box;border:1px solid #b0b0b0"></div>
<div style="left:241.3px;top:468.09999999999997px;width:2.8px;height:0.9px;background:#777"></div>
<div style="left:237.8px;top:476.15px;width:224.8px;height:13.55px;background:#f4f4f4"></div>
<div style="left:228px;top:489.7px;width:9px;height:1px;background:#777"></div>
<div style="left:237.8px;top:489.7px;width:224.8px;height:1px;background:#a6a6a6"></div>
<div style="left:228.8px;top:478.95px;width:7.2px;height:8px;background:#fff;box-sizing:border-box;border:1px solid #c2c2c2;border-radius:1px"></div>
<div style="left:237.8px;top:490.3px;width:224.8px;height:13.15px;background:#0a6fd6"></div>
<div style="left:228px;top:504.45px;width:9px;height:1px;background:#777"></div>
<div style="left:237.8px;top:504.45px;width:224.8px;height:1px;background:#a6a6a6"></div>
<div style="left:228.8px;top:493.7px;width:7.2px;height:8px;background:#fff;box-sizing:border-box;border:1px solid #999;border-radius:1px"></div>
<svg style="left:229.4px;top:494.70px" width="6" height="6" viewBox="0 0 6 6"><path d="M0.5 2.8l1.8 2l3.2-4.2" fill="none" stroke="#000" stroke-width="1.4"/></svg>
<div style="left:237.8px;top:505.65px;width:224.8px;height:13.55px;background:#f4f4f4"></div>
<div style="left:228px;top:519.2px;width:9px;height:1px;background:#777"></div>
<div style="left:237.8px;top:519.2px;width:224.8px;height:1px;background:#a6a6a6"></div>
<div style="left:228.8px;top:508.45px;width:7.2px;height:8px;background:#fff;box-sizing:border-box;border:1px solid #c2c2c2;border-radius:1px"></div>
<div style="left:237.8px;top:520.4000000000001px;width:224.8px;height:13.55px;background:#f4f4f4"></div>
<div style="left:228px;top:533.95px;width:9px;height:1px;background:#777"></div>
<div style="left:237.8px;top:533.95px;width:224.8px;height:1px;background:#a6a6a6"></div>
<div style="left:228.8px;top:523.2px;width:7.2px;height:8px;background:#fff;box-sizing:border-box;border:1px solid #c2c2c2;border-radius:1px"></div>
<div style="left:245.3px;top:524.6px;width:5.8px;height:5.8px;background:#fff;box-sizing:border-box;border:1px solid #b0b0b0"></div>
<div style="left:246.8px;top:527.1px;width:2.8px;height:0.9px;background:#777"></div>
<div style="left:386.1px;top:461.2px;width:1px;height:77px;background:#6a6a6a"></div>
<div style="left:387.1px;top:461.2px;width:1px;height:77px;background:rgba(255,255,255,.8)"></div>
<div style="left:462.6px;top:445.8px;width:11px;height:92.4px;background:#f4f4f4"></div>
<div style="left:464px;top:458.2px;width:8.6px;height:11.2px;background:#c6c6c6"></div>
<svg style="left:464.7px;top:450.2px" width="7" height="5" viewBox="0 0 7 5"><path d="M0.7 4.2l2.8-3l2.8 3" fill="none" stroke="#333" stroke-width="1.3"/></svg>
<svg style="left:464.7px;top:529.5px" width="7" height="5" viewBox="0 0 7 5"><path d="M0.7 0.8l2.8 3l2.8-3" fill="none" stroke="#333" stroke-width="1.3"/></svg>
<div style="left:237.8px;top:535px;width:224.8px;height:3.2px;background:#f4f4f4"></div>
<div style="left:228px;top:538.2px;width:245.5px;height:11.8px;background:#f0f0f0"></div>
<div style="left:239.8px;top:539px;width:174.4px;height:9.8px;background:#c9c9c9"></div>
<div style="left:324px;top:540.6px;width:6.8px;height:6.4px;background:#f1f1f1"></div>
<svg style="left:231px;top:540.6px" width="5" height="7" viewBox="0 0 5 7"><path d="M4.2 0.7l-3 2.8l3 2.8" fill="none" stroke="#222" stroke-width="1.3"/></svg>
<svg style="left:453.5px;top:540.6px" width="5" height="7" viewBox="0 0 5 7"><path d="M0.8 0.7l3 2.8l-3 2.8" fill="none" stroke="#222" stroke-width="1.3"/></svg>
<div style="left:486.3px;top:445px;width:247.4px;height:105px;background:#fff;box-sizing:border-box;border:1px solid #8a8f96"></div>
<div style="left:487.3px;top:445.8px;width:241px;height:14.4px;background:linear-gradient(#f4f4f4,#ebebeb)"></div>
<div style="left:487.3px;top:460px;width:245.4px;height:1.3px;background:#222"></div>
<div style="left:552.8px;top:445.8px;width:1.3px;height:15.3px;background:#1c1c1c"></div>
<div style="left:640.8px;top:445.8px;width:1.3px;height:15.3px;background:#1c1c1c"></div>
<div style="left:728px;top:445.8px;width:1.6px;height:15.3px;background:#1c1c1c"></div>
<div style="left:487.3px;top:461.8px;width:241px;height:13.280000000000001px;background:#ededed"></div>
<div style="left:487.3px;top:475.28px;width:241.6px;height:1px;background:#9c9c9c"></div>
<div style="left:729.6px;top:475.28px;width:1.2px;height:1px;background:#8a8a8a"></div>
<div style="left:487.3px;top:476.68px;width:241px;height:13.280000000000001px;background:#ededed"></div>
<div style="left:487.3px;top:490.15999999999997px;width:241.6px;height:1px;background:#9c9c9c"></div>
<div style="left:729.6px;top:490.15999999999997px;width:1.2px;height:1px;background:#8a8a8a"></div>
<div style="left:487.3px;top:491.56px;width:241px;height:13.280000000000001px;background:#ededed"></div>
<div style="left:487.3px;top:505.03999999999996px;width:241.6px;height:1px;background:#9c9c9c"></div>
<div style="left:729.6px;top:505.03999999999996px;width:1.2px;height:1px;background:#8a8a8a"></div>
<div style="left:487.3px;top:506.44px;width:241px;height:13.280000000000001px;background:#ededed"></div>
<div style="left:487.3px;top:519.9200000000001px;width:241.6px;height:1px;background:#9c9c9c"></div>
<div style="left:729.6px;top:519.9200000000001px;width:1.2px;height:1px;background:#8a8a8a"></div>
<div style="left:487.3px;top:521.32px;width:241px;height:13.280000000000001px;background:#ededed"></div>
<div style="left:487.3px;top:534.8000000000001px;width:241.6px;height:1px;background:#9c9c9c"></div>
<div style="left:729.6px;top:534.8000000000001px;width:1.2px;height:1px;background:#8a8a8a"></div>
<div style="left:487.3px;top:536.2px;width:241px;height:13.280000000000001px;background:#ededed"></div>
<div style="left:552.8px;top:461px;width:1px;height:88px;background:#8e8e8e"></div>
<div style="left:553.8px;top:461px;width:1px;height:88px;background:#fff"></div>
<div style="left:640.8px;top:461px;width:1px;height:88px;background:#8e8e8e"></div>
<div style="left:641.8px;top:461px;width:1px;height:88px;background:#fff"></div>
<div style="left:728.7px;top:461px;width:1px;height:88px;background:#8e8e8e"></div>
<div style="left:729.7px;top:461px;width:1px;height:88px;background:#fff"></div>
<div style="left:455px;top:552.4px;width:52px;height:2px;background:#b9d0e8"></div>
<span class="t" style="left:18.50px;top:4.71px;font-size:9.8px;color:#0b0b0b;transform:scaleX(0.8555)">Project selection</span>
<span class="t" style="left:7.60px;top:17.97px;font-size:9.6px;color:#0b0b0b;transform:scaleX(0.8541)">$(CADENAS_DATA)/23d-libs</span>
<span class="t" style="left:189.80px;top:18.63px;font-size:8px;color:#e8eff6;transform:scaleX(0.8993)">...</span>
<span class="t" style="left:32.70px;top:31.37px;font-size:9.6px;color:#0b0b0b;transform:scaleX(0.8169)">din_en_iso_4762.prj</span>
<span class="t" style="left:51.70px;top:45.43px;font-size:9.6px;color:#0b0b0b;transform:scaleX(0.8362)">%CADENAS_DATASHEET%/</span>
<div class="clip" style="left:159.30px;top:45.43px;width:32.30px"><span class="t" style="left:0;top:0;font-size:9.6px;color:#0b0b0b;transform:scaleX(0.7604)">din_en_iso_4762.pdf</span></div>
<span class="t" style="left:51.70px;top:59.49px;font-size:9.6px;color:#0b0b0b;transform:scaleX(0.8362)">%CADENAS_DATASHEET%/</span>
<div class="clip" style="left:159.30px;top:59.49px;width:32.30px"><span class="t" style="left:0;top:0;font-size:9.6px;color:#0b0b0b;transform:scaleX(0.7375)">iso_4762_d.pdf</span></div>
<span class="t" style="left:51.70px;top:73.55px;font-size:9.6px;color:#0b0b0b;transform:scaleX(0.8176)">din_962_a.jpg</span>
<span class="t" style="left:51.70px;top:87.61px;font-size:9.6px;color:#0b0b0b;transform:scaleX(0.8342)">din_962_ak.jpg</span>
<span class="t" style="left:51.70px;top:101.67px;font-size:9.6px;color:#0b0b0b;transform:scaleX(0.8342)">din_962_ch.jpg</span>
<span class="t" style="left:51.70px;top:115.73px;font-size:9.6px;color:#0b0b0b;transform:scaleX(0.8342)">din_962_cn.jpg</span>
<span class="t" style="left:51.70px;top:129.79px;font-size:9.6px;color:#0b0b0b;transform:scaleX(0.8342)">din_962_cp.jpg</span>
<span class="t" style="left:51.70px;top:143.85px;font-size:9.6px;color:#0b0b0b;transform:scaleX(0.8368)">din_962_fl.jpg</span>
<span class="t" style="left:51.70px;top:157.91px;font-size:9.6px;color:#0b0b0b;transform:scaleX(0.8378)">din_962_ld.jpg</span>
<span class="t" style="left:51.70px;top:171.97px;font-size:9.6px;color:#0b0b0b;transform:scaleX(0.8342)">din_962_pc.jpg</span>
<span class="t" style="left:51.70px;top:186.03px;font-size:9.6px;color:#0b0b0b;transform:scaleX(0.8294)">din_962_ri.jpg</span>
<span class="t" style="left:51.70px;top:200.09px;font-size:9.6px;color:#0b0b0b;transform:scaleX(0.8294)">din_962_rl.jpg</span>
<span class="t" style="left:51.70px;top:214.15px;font-size:9.6px;color:#0b0b0b;transform:scaleX(0.8286)">din_962_rn.jpg</span>
<span class="t" style="left:51.70px;top:228.21px;font-size:9.6px;color:#0b0b0b;transform:scaleX(0.8211)">din_962_sc.jpg</span>
<span class="t" style="left:51.70px;top:242.27px;font-size:9.6px;color:#0b0b0b;transform:scaleX(0.8234)">din_962_sd.jpg</span>
<span class="t" style="left:51.70px;top:256.33px;font-size:9.6px;color:#0b0b0b;transform:scaleX(0.8241)">din_962_std_gew.jpg</span>
<span class="t" style="left:51.70px;top:270.39px;font-size:9.6px;color:#0b0b0b;transform:scaleX(0.8332)">din_962_std_kopf.jpg</span>
<span class="t" style="left:51.70px;top:284.45px;font-size:9.6px;color:#0b0b0b;transform:scaleX(0.8391)">din_962_std_mid.jpg</span>
<span class="t" style="left:51.70px;top:298.51px;font-size:9.6px;color:#0b0b0b;transform:scaleX(0.8378)">din_962_tc.jpg</span>
<span class="t" style="left:51.70px;top:312.57px;font-size:9.6px;color:#0b0b0b;transform:scaleX(0.8142)">din_962_z2.jpg</span>
<span class="t" style="left:51.70px;top:326.63px;font-size:9.6px;color:#0b0b0b;transform:scaleX(0.8142)">din_962_z3.jpg</span>
<span class="t" style="left:51.70px;top:340.69px;font-size:9.6px;color:#0b0b0b;transform:scaleX(0.8115)">din_en_iso_4762.def</span>
<span class="t" style="left:51.70px;top:354.75px;font-size:9.6px;color:#0b0b0b;transform:scaleX(0.8255)">din_en_iso_4762.dim</span>
<span class="t" style="left:51.70px;top:368.81px;font-size:9.6px;color:#0b0b0b;transform:scaleX(0.8205)">din_en_iso_4762.dwg</span>
<span class="t" style="left:51.70px;top:382.87px;font-size:9.6px;color:#0b0b0b;transform:scaleX(0.8206)">din_en_iso_4762.png</span>
<span class="t" style="left:51.70px;top:396.93px;font-size:9.6px;color:#0b0b0b;transform:scaleX(0.8164)">din_en_iso_4762.tac</span>
<span class="t" style="left:51.70px;top:410.99px;font-size:9.6px;color:#0b0b0b;transform:scaleX(0.8048)">din_en_iso_4762__qa.doc</span>
<span class="t" style="left:51.70px;top:425.05px;font-size:9.6px;color:#0b0b0b;transform:scaleX(0.8076)">din_en_iso_4762_d.pra</span>
<span class="t" style="left:51.70px;top:439.11px;font-size:9.6px;color:#0b0b0b;transform:scaleX(0.8293)">din_en_iso_4762_kernloch.3db</span>
<span class="t" style="left:51.70px;top:453.17px;font-size:9.6px;color:#fff;transform:scaleX(0.8386)">din_en_iso_4762_nenngewinde.3gb</span>
<span class="t" style="left:51.70px;top:467.23px;font-size:9.6px;color:#0b0b0b;transform:scaleX(0.8417)">din_en_iso_4762_protocol.doc</span>
<span class="t" style="left:51.70px;top:481.29px;font-size:9.6px;color:#0b0b0b;transform:scaleX(0.7949)">din_en_iso_4762_s.pra</span>
<span class="t" style="left:51.70px;top:495.35px;font-size:9.6px;color:#0b0b0b;transform:scaleX(0.8006)">din_en_iso_4762_v.pra</span>
<span class="t" style="left:32.70px;top:509.41px;font-size:9.6px;color:#0b0b0b;transform:scaleX(0.8106)">din_en_iso_4762.v190925144047.prj</span>
<span class="t" style="left:32.70px;top:523.47px;font-size:9.6px;color:#0b0b0b;transform:scaleX(0.8141)">dir.v190627065521.prj</span>
<span class="t" style="left:32.70px;top:537.53px;font-size:9.6px;color:#0b0b0b;transform:scaleX(0.7955)">en_iso_7046_1_h.prj</span>
<span class="t" style="left:227.50px;top:4.61px;font-size:9.8px;color:#0b0b0b;transform:scaleX(0.8467)">Edit project</span>
<span class="t" style="left:221.80px;top:24.67px;font-size:9.6px;color:#0b0b0b;transform:scaleX(0.8326)">Database</span>
<span class="t" style="left:227.50px;top:49.77px;font-size:9.6px;color:#0b0b0b;transform:scaleX(0.8289)">Preview:</span>
<span class="t" style="left:612.70px;top:49.77px;font-size:9.6px;color:#0b0b0b;transform:scaleX(0.8564)">Published elements:</span>
<span class="t" style="left:622.60px;top:64.67px;font-size:9.6px;color:#fff;transform:scaleX(0.8572)">Placement Plane/Axis</span>
<span class="t" style="left:709.00px;top:64.67px;font-size:9.6px;color:#fff;transform:scaleX(0.7994)">CNS</span>
<span class="t" style="left:258.60px;top:422.74px;font-size:9.4px;color:#e9f0f7;transform:scaleX(0.8232)">Edit</span>
<span class="t" style="left:350.00px;top:422.57px;font-size:9.6px;color:#0b0b0b;transform:scaleX(0.8484)">Display preview</span>
<span class="t" style="left:240.60px;top:446.27px;font-size:9.6px;color:#111;transform:scaleX(0.8370)">Class name</span>
<span class="t" style="left:389.80px;top:446.27px;font-size:9.6px;color:#111;transform:scaleX(0.8643)">Classification name</span>
<span class="t" style="left:249.50px;top:461.47px;font-size:9.6px;color:#0b0b0b;transform:scaleX(0.8852)">Insertion Point</span>
<span class="t" style="left:389.20px;top:461.47px;font-size:9.6px;color:#0b0b0b;transform:scaleX(0.7895)">CNS</span>
<span class="t" style="left:255.30px;top:476.22px;font-size:9.6px;color:#0b0b0b;transform:scaleX(0.8786)">Insertion Point Named</span>
<span class="t" style="left:389.20px;top:476.22px;font-size:9.6px;color:#0b0b0b;transform:scaleX(0.7895)">CNS</span>
<span class="t" style="left:255.30px;top:490.97px;font-size:9.6px;color:#fff;transform:scaleX(0.8625)">Placement Plane/Axis</span>
<span class="t" style="left:389.20px;top:490.97px;font-size:9.6px;color:#fff;transform:scaleX(0.7895)">CNS</span>
<span class="t" style="left:255.30px;top:505.72px;font-size:9.6px;color:#0b0b0b;transform:scaleX(0.8679)">Smap Insertion Point</span>
<span class="t" style="left:389.20px;top:505.72px;font-size:9.6px;color:#0b0b0b;transform:scaleX(0.7895)">CNS</span>
<span class="t" style="left:255.30px;top:520.47px;font-size:9.6px;color:#0b0b0b;transform:scaleX(0.8690)">NX Insertion Point</span>
<span class="t" style="left:389.20px;top:520.47px;font-size:9.6px;color:#0b0b0b;transform:scaleX(0.7895)">CNS</span>
<span class="t" style="left:489.20px;top:446.27px;font-size:9.6px;color:#111;transform:scaleX(0.8223)">Feature</span>
<span class="t" style="left:556.40px;top:446.27px;font-size:9.6px;color:#111;transform:scaleX(0.8580)">Variable</span>
<span class="t" style="left:644.40px;top:446.27px;font-size:9.6px;color:#111;transform:scaleX(0.8771)">Value</span>
<span class="t" style="left:489.20px;top:461.37px;font-size:9.6px;color:#111;transform:scaleX(0.8747)">Metadata</span>
<span class="t" style="left:489.20px;top:476.25px;font-size:9.6px;color:#111;transform:scaleX(0.8365)">3D Filename</span>
<span class="t" style="left:644.40px;top:476.25px;font-size:9.6px;color:#111;transform:scaleX(0.8063)">din_en_iso_4762_nen...</span>
<span class="t" style="left:489.20px;top:491.13px;font-size:9.6px;color:#111;transform:scaleX(0.8166)">Axis</span>
<span class="t" style="left:644.40px;top:491.13px;font-size:9.6px;color:#111;transform:scaleX(0.7830)">Z</span>
<span class="t" style="left:489.20px;top:506.01px;font-size:9.6px;color:#111;transform:scaleX(0.8664)">Direction</span>
<span class="t" style="left:644.40px;top:506.01px;font-size:9.6px;color:#111;transform:scaleX(0.6737)">1</span>
<span class="t" style="left:489.20px;top:520.89px;font-size:9.6px;color:#111;transform:scaleX(0.8791)">Name</span>
<span class="t" style="left:489.20px;top:535.77px;font-size:9.6px;color:#111;transform:scaleX(0.8750)">3D Identifikation</span>
<span class="t" style="left:644.40px;top:535.77px;font-size:9.6px;color:#111;transform:scaleX(0.7954)">PNT,IP1</span>
</div></body></html>
